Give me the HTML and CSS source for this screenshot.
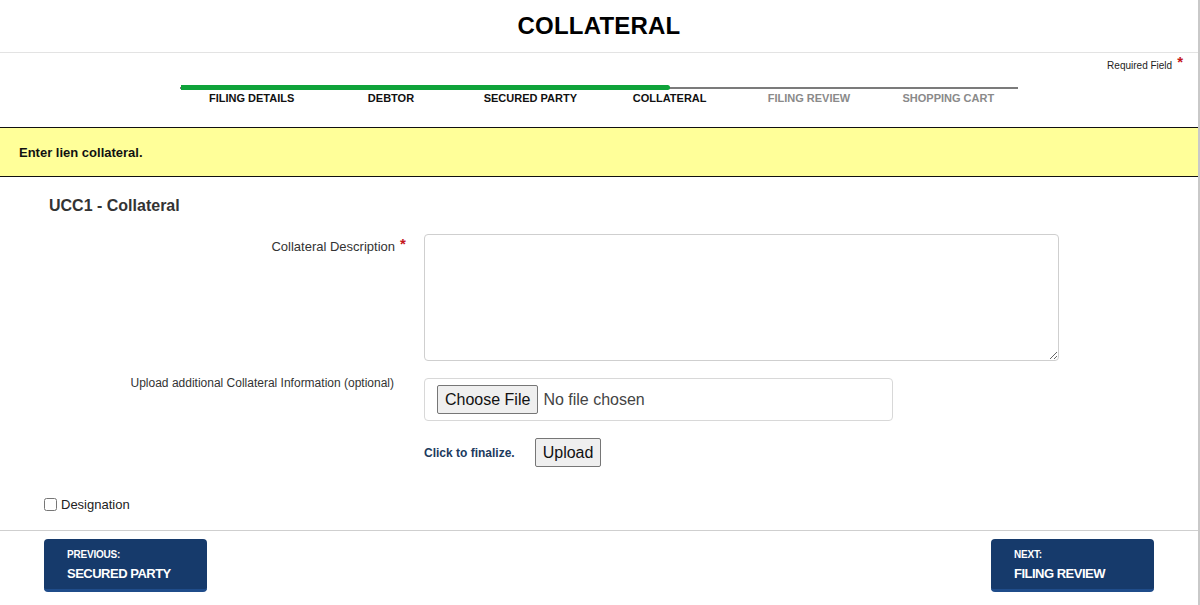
FILE: index.html
```html
<!DOCTYPE html>
<html lang="en">
<head>
<meta charset="utf-8">
<title>Collateral</title>
<link rel="stylesheet" href="styles.css">
</head>
<body>
<div class="page">
  <header class="header">
    <h1 class="title">COLLATERAL</h1>
  </header>
  <div class="req"><span>Required Field</span><span class="star">*</span></div>
  <nav class="steps">
    <div class="track"><div class="track-done"></div></div>
    <ol class="step-labels">
      <li class="done">FILING DETAILS</li>
      <li class="done">DEBTOR</li>
      <li class="done">SECURED PARTY</li>
      <li class="done">COLLATERAL</li>
      <li>FILING REVIEW</li>
      <li>SHOPPING CART</li>
    </ol>
  </nav>
  <div class="notice">Enter lien collateral.</div>
  <main class="content">
    <h2 class="section-title">UCC1 - Collateral</h2>
    <div class="form-grid">
      <label class="lbl lbl-desc" for="desc">Collateral Description</label>
      <span class="star-cell"><span class="star">*</span></span>
      <textarea id="desc" class="textarea"></textarea>

      <label class="lbl lbl-upload">Upload additional Collateral Information (optional)</label>
      <span class="star-cell"></span>
      <div class="filebox">
        <button class="btn-native" type="button">Choose File</button>
        <span class="nofile">No file chosen</span>
      </div>

      <span class="lbl"></span>
      <span class="star-cell"></span>
      <div class="finalize">
        <span class="finalize-text">Click to finalize.</span>
        <button class="btn-native" type="button">Upload</button>
      </div>
    </div>
    <label class="designation"><input type="checkbox" class="chk"> Designation</label>
  </main>
  <footer class="footer">
    <a class="navbtn" href="#"><span class="nav-small">PREVIOUS:</span><span class="nav-big">SECURED PARTY</span></a>
    <a class="navbtn" href="#"><span class="nav-small">NEXT:</span><span class="nav-big">FILING REVIEW</span></a>
  </footer>
</div>
</body>
</html>
```

FILE: styles.css
```css
* { box-sizing: border-box; }
html, body { margin: 0; padding: 0; background: #fff; }
body {
  font-family: "Liberation Sans", Arial, sans-serif;
  color: #333;
}
.page {
  width: 1200px;
  height: 605px;
  border-right: 2px solid #c9c9c9;
  overflow: hidden;
}
.header {
  height: 53px;
  border-bottom: 1px solid #e3e3e3;
  display: flex;
  justify-content: center;
  align-items: center;
}
.title {
  margin: 0;
  font-size: 24px;
  font-weight: bold;
  color: #000;
  letter-spacing: 0.2px;
  padding-bottom: 1px;
}
.req {
  display: flex;
  justify-content: flex-end;
  align-items: flex-start;
  padding: 7px 15px 0 0;
  height: 30px;
  font-size: 10px;
  line-height: 12px;
  color: #222;
}
.req .star {
  font-size: 15px;
  line-height: 10px;
  margin-left: 5px;
  margin-top: -3px;
}
.star {
  color: #c4161c;
  font-weight: bold;
}
.steps {
  width: 838px;
  margin: 2px auto 0;
}
.track {
  height: 5px;
  display: flex;
  align-items: center;
  background: linear-gradient(#fff 0 2px, #7b7b7b 2px 4px, #fff 4px);
}
.track-done {
  width: 489px;
  height: 5px;
  margin-left: 1px;
  background: #0fa33a;
  border-radius: 0 3px 3px 0;
}
.step-labels {
  list-style: none;
  margin: 2px 0 0;
  padding: 0 0 0 2px;
  display: grid;
  grid-template-columns: repeat(6, 1fr);
  font-size: 11px;
  line-height: 13px;
  font-weight: bold;
  text-align: center;
  color: #8a8a8a;
}
.step-labels .done { color: #111; }
.notice {
  margin-top: 22px;
  height: 50px;
  background: #ffff99;
  border-top: 1px solid #111;
  border-bottom: 1px solid #111;
  display: flex;
  align-items: center;
  padding: 0 19px;
  font-size: 13px;
  font-weight: bold;
  color: #111;
}
.content {
  padding: 19px 0 0 0;
  height: 354px;
  border-bottom: 1px solid #cfcfcf;
}
.section-title {
  margin: 0 0 18px 49px;
  font-size: 16px;
  line-height: 20px;
  font-weight: bold;
  color: #333;
}
.form-grid {
  display: grid;
  grid-template-columns: 395px 29px auto;
  row-gap: 17px;
  align-items: start;
}
.lbl {
  text-align: right;
  color: #333;
}
.lbl-desc {
  font-size: 13px;
  line-height: 16px;
  padding-top: 5px;
}
.lbl-upload {
  font-size: 12px;
  line-height: 14px;
  margin-top: -2px;
  padding-right: 1px;
}
.star-cell {
  padding: 2px 0 0 5px;
  font-size: 15px;
  line-height: 16px;
}
.textarea {
  width: 635px;
  height: 127px;
  border: 1px solid #cfcfcf;
  border-radius: 4px;
  resize: vertical;
  font-family: inherit;
  margin: 0;
  display: block;
}
.filebox {
  width: 469px;
  height: 43px;
  border: 1px solid #d8d8d8;
  border-radius: 4px;
  display: flex;
  align-items: center;
  padding: 0 0 0 12px;
  gap: 5px;
}
.btn-native {
  font-family: "Liberation Sans", Arial, sans-serif;
  font-size: 16px;
  line-height: 19px;
  height: 29px;
  padding: 0 7px;
  background: #efefef;
  color: #111;
  border: 1px solid #767676;
  border-radius: 2px;
}
.nofile {
  font-size: 16px;
  color: #444;
}
.finalize {
  display: flex;
  align-items: center;
  gap: 20px;
  margin-top: 0;
}
.finalize-text {
  font-size: 12px;
  font-weight: bold;
  color: #1d3b5e;
}
.designation {
  display: flex;
  align-items: center;
  margin: 30px 0 0 43px;
  font-size: 13px;
  color: #222;
}
.chk {
  width: 13px;
  height: 13px;
  margin: 0 4px 0 1px;
}
.footer {
  display: flex;
  justify-content: space-between;
  padding: 8px 44px 0 44px;
}
.navbtn {
  width: 163px;
  height: 53px;
  background: #163a6b;
  border-bottom: 3px solid #1f4c8a;
  border-radius: 4px;
  text-decoration: none;
  color: #fff;
  display: flex;
  flex-direction: column;
  padding: 10px 0 0 23px;
  font-weight: bold;
}
.nav-small {
  font-size: 10px;
  line-height: 12px;
  letter-spacing: -0.2px;
}
.nav-big {
  font-size: 13px;
  line-height: 16px;
  margin-top: 5px;
  letter-spacing: -0.5px;
}
```
